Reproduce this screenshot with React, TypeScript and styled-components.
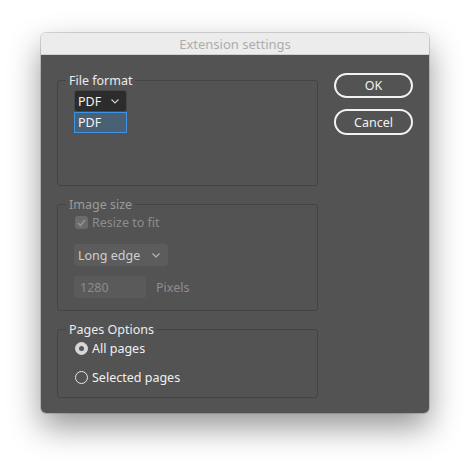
import React from "react";
import styled, { createGlobalStyle } from "styled-components";

const GlobalStyle = createGlobalStyle`
  html, body { margin: 0; padding: 0; background: #ffffff; }
  body { font-family: "Noto Sans", "Liberation Sans", sans-serif; }
`;

const Page = styled.div`
  padding: 33px 0 60px 41px;
`;

const Window = styled.div`
  width: 388px;
  height: 380px;
  border-radius: 5px;
  overflow: hidden;
  box-shadow: 0 14px 32px rgba(0, 0, 0, 0.42), 0 0 0 1px rgba(0, 0, 0, 0.14);
  display: flex;
  flex-direction: column;
`;

const TitleBar = styled.div`
  height: 22px;
  flex: none;
  background: #ececec;
  border-bottom: 1px solid #d0d0d0;
  box-sizing: border-box;
  display: flex;
  align-items: center;
  justify-content: center;
  color: #acacac;
  font-size: 13px;
`;

const Body = styled.div`
  flex: 1;
  background: #535353;
  display: flex;
  gap: 16px;
  padding: 18px 16px 0 16px;
`;

const LeftColumn = styled.div`
  width: 261px;
  display: flex;
  flex-direction: column;
  gap: 11px;
`;

const RightColumn = styled.div`
  width: 79px;
  display: flex;
  flex-direction: column;
  gap: 11px;
`;

const Group = styled.fieldset<{ $h: number }>`
  margin: 0;
  height: ${(p) => p.$h}px;
  box-sizing: border-box;
  border: 1px solid #444444;
  border-radius: 3px;
  padding: 0;
`;

const GroupContent = styled.div`
  display: flex;
  flex-direction: column;
  align-items: flex-start;
  padding-left: 16px;
`;

const Legend = styled.legend<{ $disabled?: boolean }>`
  margin-left: 8px;
  padding: 0 3px;
  font-size: 12.5px;
  line-height: 15px;
  color: ${(p) => (p.$disabled ? "#9b9b9b" : "#ececec")};
`;

const SelectWrap = styled.div`
  position: relative;
`;

const Select = styled.div<{ $w: number; $disabled?: boolean }>`
  width: ${(p) => p.$w}px;
  height: 22px;
  box-sizing: border-box;
  border-radius: 3px;
  background: ${(p) => (p.$disabled ? "#5c5c5c" : "#2c2c2c")};
  border: 1px solid ${(p) => (p.$disabled ? "#5c5c5c" : "#474747")};
  display: flex;
  align-items: center;
  justify-content: space-between;
  padding: 0 7px 0 3px;
  font-size: 12.5px;
  color: ${(p) => (p.$disabled ? "#cfcfcf" : "#f2f2f2")};
`;

const Chevron = styled.svg<{ $disabled?: boolean }>`
  width: 8px;
  height: 5px;
  stroke: ${(p) => (p.$disabled ? "#b8b8b8" : "#cfcfcf")};
  fill: none;
  stroke-width: 1.1;
`;

const Menu = styled.div`
  position: absolute;
  left: 0;
  top: 22px;
  width: 53px;
  height: 21px;
  box-sizing: border-box;
  background: #4a6075;
  border: 1px solid #3d93e6;
  display: flex;
  align-items: center;
  padding-left: 3px;
  font-size: 12.5px;
  color: #f4f4f4;
`;

const CheckRow = styled.label<{ $disabled?: boolean }>`
  display: flex;
  align-items: center;
  gap: 4px;
  font-size: 12.5px;
  color: ${(p) => (p.$disabled ? "#8d8d8d" : "#f0f0f0")};
`;

const CheckBox = styled.span`
  width: 13px;
  height: 13px;
  margin-left: 1px;
  box-sizing: border-box;
  border-radius: 3px;
  background: #6b6b6b;
  display: flex;
  align-items: center;
  justify-content: center;
`;

const Radio = styled.span<{ $checked?: boolean }>`
  width: 13px;
  height: 13px;
  margin-left: 1px;
  box-sizing: border-box;
  border-radius: 50%;
  background: ${(p) => (p.$checked ? "#d6d6d6" : "transparent")};
  border: 1px solid ${(p) => (p.$checked ? "#d6d6d6" : "#e8e8e8")};
  display: flex;
  align-items: center;
  justify-content: center;
  &::after {
    content: "";
    display: ${(p) => (p.$checked ? "block" : "none")};
    width: 5px;
    height: 5px;
    border-radius: 50%;
    background: #565656;
  }
`;

const InputRow = styled.div`
  display: flex;
  align-items: center;
  gap: 10px;
`;

const NumberInput = styled.div`
  width: 72px;
  height: 22px;
  box-sizing: border-box;
  background: #5a5a5a;
  border-radius: 2px;
  display: flex;
  align-items: center;
  padding-left: 6px;
  font-size: 12.5px;
  color: #8c8c8c;
`;

const Unit = styled.span`
  font-size: 12.5px;
  color: #8f8f8f;
`;

const Spacer = styled.div<{ $h: number }>`
  height: ${(p) => p.$h}px;
  flex: none;
`;

const Button = styled.button<{ $h: number }>`
  width: 79px;
  height: ${(p) => p.$h}px;
  box-sizing: border-box;
  border: 2px solid #f2f2f2;
  border-radius: 13px;
  background: transparent;
  color: #f2f2f2;
  font-family: inherit;
  font-size: 12.5px;
  padding: 0;
`;

const ChevronIcon = ({ disabled }: { disabled?: boolean }) => (
  <Chevron $disabled={disabled} viewBox="0 0 8 5">
    <polyline points="0.5,0.5 4,4 7.5,0.5" />
  </Chevron>
);

export default function App() {
  return (
    <>
      <GlobalStyle />
      <Page>
        <Window>
          <TitleBar>Extension settings</TitleBar>
          <Body>
            <LeftColumn>
              <Group $h={113}>
                <Legend>File format</Legend>
                <GroupContent>
                  <Spacer $h={2} />
                  <SelectWrap>
                    <Select $w={53}>
                      <span>PDF</span>
                      <ChevronIcon />
                    </Select>
                    <Menu>PDF</Menu>
                  </SelectWrap>
                </GroupContent>
              </Group>
              <Group $h={114}>
                <Legend $disabled>Image size</Legend>
                <GroupContent>
                  <Spacer $h={2} />
                  <CheckRow $disabled>
                    <CheckBox>
                      <svg width="9" height="8" viewBox="0 0 9 8">
                        <polyline points="1,4 3.5,6.5 8,1" fill="none" stroke="#939393" strokeWidth="1.6" />
                      </svg>
                    </CheckBox>
                    Resize to fit
                  </CheckRow>
                  <Spacer $h={13} />
                  <Select $w={94} $disabled>
                    <span>Long edge</span>
                    <ChevronIcon disabled />
                  </Select>
                  <Spacer $h={10} />
                  <InputRow>
                    <NumberInput>1280</NumberInput>
                    <Unit>Pixels</Unit>
                  </InputRow>
                </GroupContent>
              </Group>
              <Group $h={76}>
                <Legend>Pages Options</Legend>
                <GroupContent>
                  <Spacer $h={3} />
                  <CheckRow>
                    <Radio $checked />
                    All pages
                  </CheckRow>
                  <Spacer $h={12} />
                  <CheckRow>
                    <Radio />
                    Selected pages
                  </CheckRow>
                </GroupContent>
              </Group>
            </LeftColumn>
            <RightColumn>
              <Button $h={25}>OK</Button>
              <Button $h={26}>Cancel</Button>
            </RightColumn>
          </Body>
        </Window>
      </Page>
    </>
  );
}
